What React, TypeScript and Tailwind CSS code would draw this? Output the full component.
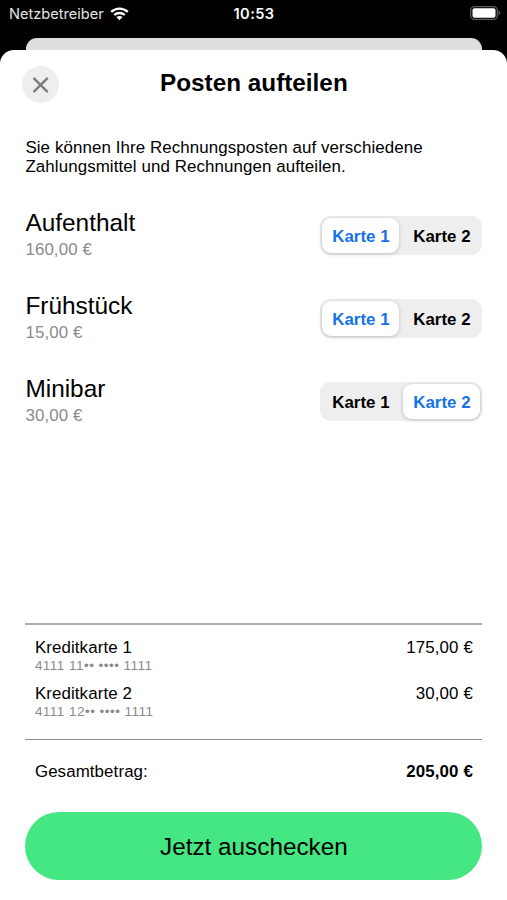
import { useState } from 'react';

type CardId = 1 | 2;

interface BillItem {
  id: string;
  name: string;
  amount: number;
}

interface CardSelectProps {
  value: CardId;
  onChange: (card: CardId) => void;
}

const items: BillItem[] = [
  { id: 'stay', name: 'Aufenthalt', amount: 160 },
  { id: 'breakfast', name: 'Frühstück', amount: 15 },
  { id: 'minibar', name: 'Minibar', amount: 30 },
];

const cards: { id: CardId; number: string }[] = [
  { id: 1, number: '4111 11•• •••• 1111' },
  { id: 2, number: '4111 12•• •••• 1111' },
];

const formatAmount = (amount: number) => `${amount.toFixed(2).replace('.', ',')} €`;

const StatusBar = () => (
  <div className="grid h-[38px] grid-cols-3 px-[9px] pt-[5px] font-['Inter',sans-serif] text-white">
    <div className="flex h-[18px] items-center gap-[6px] text-[14.6px] leading-[18px] text-[#e4e4e4]">
      <span>Netzbetreiber</span>
      <svg width="19" height="14" viewBox="0 0 19 14" className="shrink-0" fill="none">
        <path d="M1.2 4.8C6 .5 13 .5 17.8 4.8" stroke="white" strokeWidth="2.4" />
        <path d="M4.2 8C7.2 5.3 11.8 5.3 14.8 8" stroke="white" strokeWidth="2.3" />
        <path d="M6.4 10.1C8.2 8.5 10.8 8.5 12.6 10.1L9.5 13.2Z" fill="white" />
      </svg>
    </div>
    <div className="pl-px text-center text-[14.6px] leading-[18px] font-semibold tracking-[0.4px]">10:53</div>
    <svg width="31" height="14" viewBox="0 0 31 14" className="-mr-[3px] mt-[1px] justify-self-end">
      <rect x=".7" y=".7" width="26.6" height="12.6" rx="3.8" fill="none" stroke="#5c5c5c" strokeWidth="1.3" />
      <rect x="2.5" y="2.3" width="23" height="9.4" rx="2" fill="white" />
      <path d="M28.6 4.6C30.8 5.5 30.8 8.5 28.6 9.4Z" fill="#5c5c5c" />
    </svg>
  </div>
);

const CardSelect = ({ value, onChange }: CardSelectProps) => (
  <div className="flex h-[39px] w-[162px] justify-between rounded-[11px] bg-[#eeeeef] p-[2px]">
    {cards.map((card) => (
      <button
        key={card.id}
        type="button"
        onClick={() => onChange(card.id)}
        className={
          value === card.id
            ? 'w-[77px] rounded-[9px] bg-white pt-[2px] text-[16.9px] font-bold text-[#1473e6] shadow-[0_1px_4px_rgba(0,0,0,0.2)]'
            : 'w-[77px] pt-[2px] text-[16.9px] font-bold text-black'
        }
      >
        Karte {card.id}
      </button>
    ))}
  </div>
);

const App = () => {
  const [assignment, setAssignment] = useState<Record<string, CardId>>({
    stay: 1,
    breakfast: 1,
    minibar: 2,
  });

  const sumForCard = (card: CardId) =>
    items.filter((item) => assignment[item.id] === card).reduce((sum, item) => sum + item.amount, 0);

  const total = items.reduce((sum, item) => sum + item.amount, 0);

  return (
    <div className="flex h-[900px] w-[507px] flex-col overflow-hidden bg-black font-['Liberation_Sans',Arial,sans-serif] text-black">
      <StatusBar />
      {/* Edge of the page behind the sheet */}
      <div className="mr-[25px] ml-[26px] h-3 shrink-0 rounded-t-[11px] bg-[#dedede]" />

      <main className="flex flex-1 flex-col rounded-t-[14px] bg-white pr-[24.6px] pl-[25.4px]">
        <header className="grid h-[68px] grid-cols-[37px_1fr_37px] items-center">
          <button
            type="button"
            aria-label="Schließen"
            className="-ml-[3.4px] mt-[1px] flex size-[37px] items-center justify-center rounded-full bg-[#eeeeef]"
          >
            <svg width="16" height="16" viewBox="0 0 16 16" fill="none" stroke="#7c7c80" strokeWidth="2.4" strokeLinecap="round">
              <path d="M1.2 1.6L14 14.4M14 1.6L1.2 14.4" />
            </svg>
          </button>
          <h1 className="-mt-[3px] text-center text-[24.3px] leading-7 font-bold">Posten aufteilen</h1>
        </header>

        <p className="mt-5 text-[16.9px] leading-[19px] tracking-[0.1px]">
          Sie können Ihre Rechnungsposten auf verschiedene
          <br />
          Zahlungsmittel und Rechnungen aufteilen.
        </p>

        {/* Items */}
        <ul className="mt-[33px] flex flex-col gap-[34px]">
          {items.map((item) => (
            <li key={item.id} className="flex h-[49px] items-start justify-between">
              <div>
                <h2 className="text-[24.4px] leading-[28px]">{item.name}</h2>
                <p className="text-[16.9px] leading-[25px] tracking-[0.1px] text-[#8a8a8e]">
                  {formatAmount(item.amount)}
                </p>
              </div>
              <div className="mt-[7px]">
                <CardSelect
                  value={assignment[item.id]}
                  onChange={(card) => setAssignment({ ...assignment, [item.id]: card })}
                />
              </div>
            </li>
          ))}
        </ul>

        {/* Totals */}
        <section className="mt-auto border-t-2 border-[#adadad] px-[9.5px] pt-[13px]">
          <div className="flex h-[101px] flex-col gap-[9px]">
            {cards.map((card) => (
              <div key={card.id} className="flex h-[37px] justify-between text-[16.9px] leading-5 tracking-[0.1px]">
                <div>
                  <p>Kreditkarte {card.id}</p>
                  <p className="text-[13.5px] leading-4 tracking-[0.47px] text-[#8a8a8e]">{card.number}</p>
                </div>
                <span>{formatAmount(sumForCard(card.id))}</span>
              </div>
            ))}
          </div>
        </section>
        <div className="flex h-[73px] justify-between border-t border-[#8f8f8f] px-[9.5px] pt-[22px] text-[16.9px] leading-5 tracking-[0.1px]">
          <span>Gesamtbetrag:</span>
          <span className="font-bold">{formatAmount(total)}</span>
        </div>

        <button
          type="button"
          className="mb-5 h-[68px] shrink-0 rounded-full bg-[#44e782] pt-[2px] text-[24.3px]"
        >
          Jetzt auschecken
        </button>
      </main>
    </div>
  );
};

export default App;
